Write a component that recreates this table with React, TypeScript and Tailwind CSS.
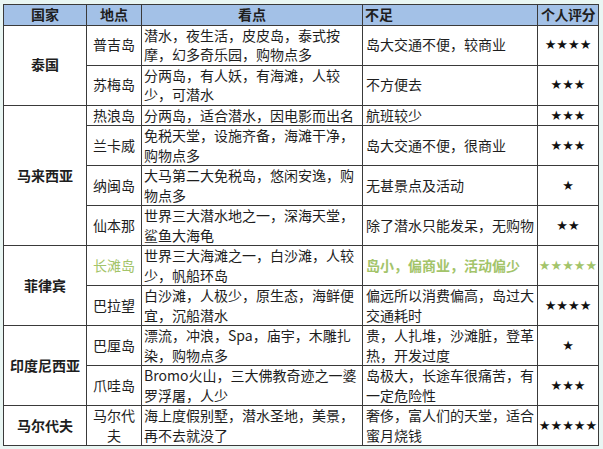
import React from "react";

type Spot = {
  name: string[];
  see: string[];
  cons: string[];
  stars: number;
  highlight?: boolean;
};

type Country = { country: string; spots: Spot[] };

const data: Country[] = [
  {
    country: "泰国",
    spots: [
      {
        name: ["普吉岛"],
        see: ["潜水，夜生活，皮皮岛，泰式按", "摩，幻多奇乐园，购物点多"],
        cons: ["岛大交通不便，较商业"],
        stars: 4,
      },
      {
        name: ["苏梅岛"],
        see: ["分两岛，有人妖，有海滩，人较", "少，可潜水"],
        cons: ["不方便去"],
        stars: 3,
      },
    ],
  },
  {
    country: "马来西亚",
    spots: [
      {
        name: ["热浪岛"],
        see: ["分两岛，适合潜水，因电影而出名"],
        cons: ["航班较少"],
        stars: 3,
      },
      {
        name: ["兰卡威"],
        see: ["免税天堂，设施齐备，海滩干净，", "购物点多"],
        cons: ["岛大交通不便，很商业"],
        stars: 3,
      },
      {
        name: ["纳闽岛"],
        see: ["大马第二大免税岛，悠闲安逸，购", "物点多"],
        cons: ["无甚景点及活动"],
        stars: 1,
      },
      {
        name: ["仙本那"],
        see: ["世界三大潜水地之一，深海天堂，", "鲨鱼大海龟"],
        cons: ["除了潜水只能发呆，无购物"],
        stars: 2,
      },
    ],
  },
  {
    country: "菲律宾",
    spots: [
      {
        name: ["长滩岛"],
        see: ["世界三大海滩之一，白沙滩，人较", "少，帆船环岛"],
        cons: ["岛小，偏商业，活动偏少"],
        stars: 5,
        highlight: true,
      },
      {
        name: ["巴拉望"],
        see: ["白沙滩，人极少，原生态，海鲜便", "宜，沉船潜水"],
        cons: ["偏远所以消费偏高，岛过大", "交通耗时"],
        stars: 4,
      },
    ],
  },
  {
    country: "印度尼西亚",
    spots: [
      {
        name: ["巴厘岛"],
        see: ["漂流，冲浪，Spa，庙宇，木雕扎", "染，购物点多"],
        cons: ["贵，人扎堆，沙滩脏，登革", "热，开发过度"],
        stars: 1,
      },
      {
        name: ["爪哇岛"],
        see: ["Bromo火山，三大佛教奇迹之一婆", "罗浮屠，人少"],
        cons: ["岛极大，长途车很痛苦，有", "一定危险性"],
        stars: 3,
      },
    ],
  },
  {
    country: "马尔代夫",
    spots: [
      {
        name: ["马尔代", "夫"],
        see: ["海上度假别墅，潜水圣地，美景，", "再不去就没了"],
        cons: ["奢侈，富人们的天堂，适合", "蜜月烧钱"],
        stars: 5,
      },
    ],
  },
];

function Lines({ lines }: { lines: string[] }) {
  return (
    <>
      {lines.map((l, i) => (
        <div key={i} className="whitespace-nowrap">
          {l}
        </div>
      ))}
    </>
  );
}

const cell = "border border-[#3a3a3a] p-0 align-middle";

export default function App() {
  return (
    <div
      className="min-h-[449px] w-[603px] bg-[#e9f6f3] pl-[3px] pt-[4px] text-[14px] leading-[19.5px] text-[#1e1e1e]"
      style={{ fontFamily: '"Noto Sans CJK SC", "Noto Sans", sans-serif' }}
    >
      <table className="table-fixed border-collapse border border-[#3a3a3a] bg-white">
        <colgroup>
          <col className="w-[83px]" />
          <col className="w-[55px]" />
          <col className="w-[221px]" />
          <col className="w-[175px]" />
          <col className="w-[61px]" />
        </colgroup>
        <thead>
          <tr className="bg-[#a3c1e7] font-bold">
            <th className={`${cell} text-center`}>国家</th>
            <th className={`${cell} text-center`}>地点</th>
            <th className={`${cell} text-center`}>看点</th>
            <th className={`${cell} pl-[2px] text-left`}>不足</th>
            <th className={`${cell} text-center tracking-[-0.5px]`}>个人评分</th>
          </tr>
        </thead>
        <tbody>
          {data.map((c) =>
            c.spots.map((s, i) => (
              <tr key={c.country + i}>
                {i === 0 && (
                  <td rowSpan={c.spots.length} className={`${cell} text-center font-bold`}>
                    {c.country}
                  </td>
                )}
                <td
                  className={`${cell} text-center ${s.highlight ? "text-[#a3c46a]" : ""}`}
                >
                  <Lines lines={s.name} />
                </td>
                <td className={`${cell} pl-[2px]`}>
                  <Lines lines={s.see} />
                </td>
                <td
                  className={`${cell} pl-[3px] ${s.highlight ? "font-bold text-[#a3c46a]" : ""}`}
                >
                  <Lines lines={s.cons} />
                </td>
                <td
                  className={`${cell} text-center text-[13px] ${s.highlight ? "text-[#a3c46a]" : "text-[#111]"}`}
                  style={{ fontFamily: '"DejaVu Sans", sans-serif' }}
                >
                  {"★".repeat(s.stars)}
                </td>
              </tr>
            ))
          )}
        </tbody>
      </table>
    </div>
  );
}
